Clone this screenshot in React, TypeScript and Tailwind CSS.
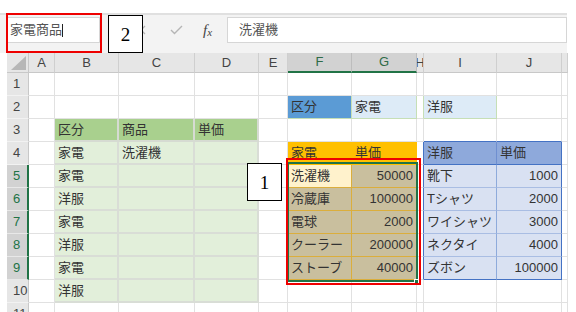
import React from "react";

type Cell = { t?: string; c: string; n?: boolean };

const DEF = "border-r border-b border-[#e1e1e1]";
const GH = "bg-[#a9d08e] border-r-2 border-b-2 border-[#d6dbd2]";
const GL = "bg-[#e2efda] border-r-2 border-b-2 border-[#d9ddd6]";
const BLUE = "bg-[#5b9bd5] border-r border-b border-[#c6dfb6]";
const LBLUE = "bg-[#ddebf7] border-r border-b border-[#c6dfb6]";
const GOLD = "bg-[#ffc000] border-r border-b border-[#ffc000] text-[#5c4600]";
const TAN = "bg-[#c9bf9e] border-r border-b border-[#dbae3c]";
const ACTIVE = "bg-[#fff2cc] border-r border-b border-[#dbae3c]";
const BHI = "bg-[#8ea9db] border-r border-b border-r-[#6f8fd0] border-b-[#4472c4]";
const BHJ = "bg-[#8ea9db] border-r border-b border-[#4472c4]";
const BI = "bg-[#d9e1f2] border-r border-b border-r-[#8eaadb] border-b-[#a9bde3]";
const BJ = "bg-[#d9e1f2] border-r border-b border-r-[#4472c4] border-b-[#a9bde3]";
const BI9 = "bg-[#d9e1f2] border-r border-b border-r-[#8eaadb] border-b-[#4472c4]";
const BJ9 = "bg-[#d9e1f2] border-r border-b border-[#4472c4]";
const HBLUE = "border-b border-r border-b-[#e1e1e1] border-r-[#4472c4]";
const TOPBLUE = "border-r border-b border-r-[#e1e1e1] border-b-[#4472c4]";
const HGREEN = "border-b border-r border-b-[#e1e1e1] border-r-[#c6dfb6]";

const CELLS: Record<string, Cell> = {
  F2: { t: "区分", c: BLUE },
  G2: { t: "家電", c: LBLUE },
  H2: { c: HGREEN },
  I2: { t: "洋服", c: LBLUE },
  B3: { t: "区分", c: GH },
  C3: { t: "商品", c: GH },
  D3: { t: "単価", c: GH },
  I3: { c: TOPBLUE },
  J3: { c: TOPBLUE },
  B4: { t: "家電", c: GL },
  C4: { t: "洗濯機", c: GL },
  D4: { c: GL },
  F4: { t: "家電", c: GOLD },
  G4: { t: "単価", c: GOLD },
  H4: { c: HBLUE },
  I4: { t: "洋服", c: BHI },
  J4: { t: "単価", c: BHJ },
  B5: { t: "家電", c: GL },
  C5: { c: GL },
  D5: { c: GL },
  F5: { t: "洗濯機", c: ACTIVE },
  G5: { t: "50000", c: TAN, n: true },
  H5: { c: HBLUE },
  I5: { t: "靴下", c: BI },
  J5: { t: "1000", c: BJ, n: true },
  B6: { t: "洋服", c: GL },
  C6: { c: GL },
  D6: { c: GL },
  F6: { t: "冷蔵庫", c: TAN },
  G6: { t: "100000", c: TAN, n: true },
  H6: { c: HBLUE },
  I6: { t: "Tシャツ", c: BI },
  J6: { t: "2000", c: BJ, n: true },
  B7: { t: "家電", c: GL },
  C7: { c: GL },
  D7: { c: GL },
  F7: { t: "電球", c: TAN },
  G7: { t: "2000", c: TAN, n: true },
  H7: { c: HBLUE },
  I7: { t: "ワイシャツ", c: BI },
  J7: { t: "3000", c: BJ, n: true },
  B8: { t: "洋服", c: GL },
  C8: { c: GL },
  D8: { c: GL },
  F8: { t: "クーラー", c: TAN },
  G8: { t: "200000", c: TAN, n: true },
  H8: { c: HBLUE },
  I8: { t: "ネクタイ", c: BI },
  J8: { t: "4000", c: BJ, n: true },
  B9: { t: "家電", c: GL },
  C9: { c: GL },
  D9: { c: GL },
  F9: { t: "ストーブ", c: TAN },
  G9: { t: "40000", c: TAN, n: true },
  H9: { c: HBLUE },
  I9: { t: "ズボン", c: BI9 },
  J9: { t: "100000", c: BJ9, n: true },
  B10: { t: "洋服", c: GL },
  C10: { c: GL },
  D10: { c: GL },
};

const COLS = ["A", "B", "C", "D", "E", "F", "G", "H", "I", "J", "K"];
const ROWS = [1, 2, 3, 4, 5, 6, 7, 8, 9, 10, 11];

function Corner() {
  return (
    <div className="h-[20px] bg-[#e6e6e6] border-r border-b border-[#c8c8c8] relative">
      <svg width="22" height="20" className="block">
        <polygon points="4,17 19,17 19,3" fill="#b7b7b7" />
      </svg>
    </div>
  );
}

function ColHeader({ col }: { col: string }) {
  const sel = col === "F" || col === "G";
  return (
    <div
      className={
        sel
          ? "h-[20px] bg-[#d2d2d2] text-[#2f6b47] border-r border-r-[#bdbdbd] border-b-2 border-b-[#217346] flex items-center justify-center overflow-hidden text-[13px]"
          : "h-[20px] bg-[#e6e6e6] text-[#444] border-r border-r-[#cfcfcf] border-b border-b-[#c8c8c8] flex items-center justify-center overflow-hidden text-[13px]"
      }
    >
      {col === "K" ? "" : col}
    </div>
  );
}

function RowHeader({ r }: { r: number }) {
  const sel = r >= 5 && r <= 9;
  return (
    <div
      className={
        sel
          ? "h-[23px] bg-[#d2d2d2] text-[#217346] border-b border-b-[#e8e8e8] border-r-2 border-r-[#217346] flex items-center pl-[6px] text-[13px]"
          : "h-[23px] bg-[#e6e6e6] text-[#444] border-b border-b-[#f2f2f2] border-r border-r-[#c8c8c8] flex items-center pl-[6px] text-[13px]"
      }
    >
      {r}
    </div>
  );
}

function DataCell({ r, col }: { r: number; col: string }) {
  const cell = CELLS[col + r];
  const cls = cell ? cell.c : DEF;
  return (
    <div
      className={
        "h-[23px] flex items-center overflow-hidden whitespace-nowrap text-[13px] text-[#333] " +
        cls +
        (cell && cell.n ? " justify-end pr-[3px]" : " pl-[3px]")
      }
    >
      {cell?.t ?? ""}
    </div>
  );
}

export default function App() {
  return (
    <div className="relative w-[576px] h-[312px] overflow-hidden bg-white font-['Liberation_Sans','Noto_Sans_CJK_JP',sans-serif]">
      <div className="h-[13px]" />
      {/* formula bar */}
      <div className="w-[567px] h-[40px] bg-[#f3f3f3] border-t-2 border-[#e0e0e0] flex items-start">
        <div className="ml-[7px] mt-[2px] w-[93px] h-[26px] bg-white border border-[#d6d6d6] flex items-center pl-[2px] text-[13px] text-[#555]">
          家電商品
          <span className="inline-block w-[1px] h-[13px] bg-[#222]" />
        </div>
        <div className="ml-[36px] mt-[10px] w-[10px] h-[10px]">
          <svg width="10" height="10" className="block">
            <path d="M1 1 L9 9 M9 1 L1 9" stroke="#b5b5b5" strokeWidth="1.3" fill="none" />
          </svg>
        </div>
        <div className="ml-[24px] mt-[10px] w-[13px] h-[10px]">
          <svg width="13" height="10" className="block">
            <path d="M1 5 L4.5 8.5 L12 1" stroke="#b5b5b5" strokeWidth="1.4" fill="none" />
          </svg>
        </div>
        <div className="ml-[20px] mt-[7px] h-[16px] flex items-end italic font-['Liberation_Serif',serif] text-[#444] leading-none">
          <span className="text-[15px]">f</span>
          <span className="text-[11px]">x</span>
        </div>
        <div className="ml-[15px] mt-[2px] flex-1 h-[26px] bg-white border border-[#d6d6d6] flex items-center pl-[11px] text-[13px] text-[#555]">
          洗濯機
        </div>
      </div>

      {/* sheet */}
      <div className="ml-[7px] w-[561px] grid grid-cols-[22px_26px_64px_76px_64px_29px_64px_65px_7px_73px_65px_1fr]">
        <Corner />
        {COLS.map((c) => (
          <ColHeader key={c} col={c} />
        ))}
        {ROWS.map((r) => (
          <React.Fragment key={r}>
            <RowHeader r={r} />
            {COLS.map((c) => (
              <DataCell key={c + r} r={r} col={c} />
            ))}
          </React.Fragment>
        ))}
      </div>

      {/* selection border */}
      <div className="absolute left-[287px] top-[162px] w-[131px] h-[120px] border-2 border-[#217346]" />
      <div className="absolute left-[414px] top-[279px] w-[5px] h-[5px] bg-[#217346] border border-white" />

      {/* annotations */}
      <div className="absolute left-[6px] top-[13px] w-[96px] h-[40px] border-2 border-[#ee0000]" />
      <div className="absolute left-[108px] top-[15px] w-[35px] h-[38px] bg-white border border-black flex items-center justify-center pt-[3px] font-['Liberation_Serif',serif] text-[19px] text-black">
        2
      </div>
      <div className="absolute left-[286px] top-[158px] w-[135px] h-[127px] border-2 border-[#ee0000]" />
      <div className="absolute left-[247px] top-[163px] w-[35px] h-[38px] bg-white border border-black flex items-center justify-center pt-[3px] font-['Liberation_Serif',serif] text-[19px] text-black">
        1
      </div>
    </div>
  );
}
